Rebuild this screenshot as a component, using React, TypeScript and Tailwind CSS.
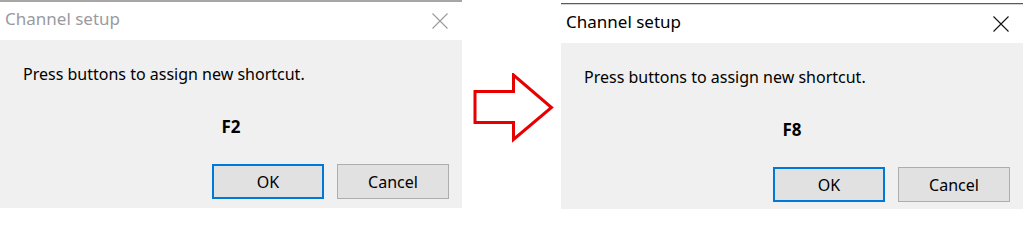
import React from "react";

function CloseIcon({ color }: { color: string }) {
  return (
    <svg width="16" height="16" viewBox="0 0 16 16" className="block">
      <path d="M0.5 0.5 L15.5 15.5 M15.5 0.5 L0.5 15.5" stroke={color} strokeWidth="1.1" fill="none" />
    </svg>
  );
}

function Dialog({ keyName, active }: { keyName: string; active: boolean }) {
  return (
    <div className="flex w-[462px] flex-col">
      {active ? (
        <div className="flex flex-col">
          <div className="h-px bg-[#5c5c5c]" />
          <div className="h-px bg-[#d4d4d4]" />
        </div>
      ) : (
        <div className="h-[2px] bg-[#a6a6a6]" />
      )}
      <div className="flex h-[38px] items-start justify-between bg-white pl-[5px] pr-[14px]">
        <span
          className={`pt-[5px] text-[17px] leading-[24px] ${active ? "text-black" : "text-[#9a9aa0]"}`}
        >
          Channel setup
        </span>
        <div className="pt-[11px]">
          <CloseIcon color={active ? "#111111" : "#9a9a9a"} />
        </div>
      </div>
      <div className="flex h-[168px] flex-col bg-[#f0f0f0] pt-[23px]">
        <p className="pl-[23px] text-[16px] leading-[22px] text-black">Press buttons to assign new shortcut.</p>
        <p className="mt-[31px] text-center text-[17px] font-bold leading-[22px] text-black">{keyName}</p>
        <div className="mt-[26px] flex justify-end gap-[13px] pr-[13px]">
          <button className="h-[35px] w-[112px] border-2 border-[#0078d7] bg-[#e1e1e1] text-[16px] text-black">
            OK
          </button>
          <button className="h-[35px] w-[112px] border border-[#adadad] bg-[#e1e1e1] text-[16px] text-black">
            Cancel
          </button>
        </div>
      </div>
    </div>
  );
}

function Arrow() {
  return (
    <svg width="82" height="70" viewBox="0 0 82 70" className="block">
      <path
        d="M2 18.5 L40.5 18.5 L40.5 2 L78.5 34.5 L40.5 66.5 L40.5 49.5 L2 49.5 Z"
        fill="white"
        stroke="#e60000"
        strokeWidth="3"
        strokeLinejoin="miter"
      />
    </svg>
  );
}

export default function App() {
  return (
    <div
      className="flex h-[209px] w-[1024px] overflow-hidden bg-white"
      style={{ fontFamily: '"Noto Sans", "Open Sans", sans-serif' }}
    >
      <Dialog keyName="F2" active={false} />
      <div className="w-[99px] pl-[11px] pt-[73px]">
        <Arrow />
      </div>
      <div className="pt-[3px]">
        <Dialog keyName="F8" active={true} />
      </div>
    </div>
  );
}
